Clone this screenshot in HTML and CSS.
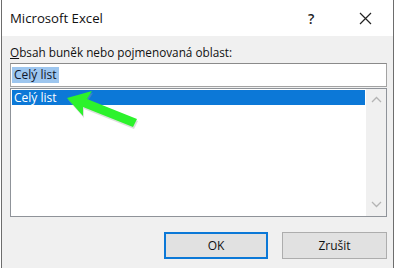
FILE: index.html
```html
<!DOCTYPE html>
<html>
<head>
<meta charset="utf-8">
<link rel="stylesheet" href="styles.css">
</head>
<body>
<div class="window">
  <div class="titlebar">
    <span class="title">Microsoft Excel</span>
    <span class="help">?</span>
    <span class="close">
      <svg width="13" height="13" viewBox="0 0 13 13"><path d="M1 1 L12 12 M12 1 L1 12" stroke="#222" stroke-width="1.2" fill="none"/></svg>
    </span>
  </div>
  <div class="content">
    <div class="label"><u>O</u>bsah buněk nebo pojmenovaná oblast:</div>
    <div class="input"><span class="sel">Celý list</span></div>
    <div class="listbox">
      <div class="items">
        <div class="item selected">Celý list</div>
      </div>
      <div class="scrollbar">
        <svg width="11" height="7" viewBox="0 0 11 7"><path d="M1 6 L5.5 1.5 L10 6" stroke="#b4b4b4" stroke-width="1.3" fill="none"/></svg>
        <svg width="11" height="7" viewBox="0 0 11 7"><path d="M1 1 L5.5 5.5 L10 1" stroke="#b4b4b4" stroke-width="1.3" fill="none"/></svg>
      </div>
    </div>
    <div class="buttons">
      <div class="btn default">OK</div>
      <div class="btn">Zrušit</div>
    </div>
  </div>
  <svg class="arrow" width="394" height="268" viewBox="0 0 394 268">
    <path d="M66 98 L91 91 L86 99 L136 119 L132 127 L82 107 L82 116 Z" fill="#9aa19a" opacity="0.35" transform="translate(1,2)"/>
    <path d="M66 98 L91 91 L86 99 L136 119 L132 127 L82 107 L82 116 Z" fill="#2cf22c"/>
  </svg>
</div>
</body>
</html>
```
FILE: styles.css
```css
html, body { margin: 0; padding: 0; background: #ffffff; }
body { font-family: "Open Sans", "Noto Sans", "Liberation Sans", sans-serif; color: #000; }
.window {
  position: relative;
  width: 391px;
  height: 268px;
  border-left: 1px solid #6d6d6d;
  border-right: 1px solid #6d6d6d;
  display: flex;
  flex-direction: column;
  background: #f0f0f0;
  margin-left: 1px;
}
.titlebar {
  height: 36px;
  background: #fff;
  display: flex;
  align-items: center;
  padding-left: 8px;
}
.title { font-size: 13.2px; flex: 1; color: #111; }
.help { font-size: 14px; font-weight: 600; width: 14px; margin-right: 37px; color: #222; }
.close { width: 13px; height: 13px; margin-right: 21px; display: flex; }
.content {
  flex: 1;
  padding: 8px 6px 0 8px;
  display: flex;
  flex-direction: column;
}
.label { font-size: 11.75px; line-height: 16px; color: #111; height: 19px; }
.input {
  height: 22px;
  background: #fff;
  border: 1px solid #a3a3a3;
  border-top-color: #8a8a8a;
  display: flex;
  align-items: center;
  padding-left: 1px;
  font-size: 12px;
}
.sel { background: #9dc6ef; color: #10162a; padding: 0 2px; line-height: 16px; }
.listbox {
  margin-top: 1px;
  height: 127px;
  background: #fff;
  border: 1px solid #8f9399;
  display: flex;
}
.items { flex: 1; padding: 1px 1px 0 1px; }
.item { font-size: 12px; line-height: 15px; padding-left: 2px; }
.item.selected { background: #0c78d7; color: #fff; }
.scrollbar {
  width: 20px;
  background: #f0f0f0;
  display: flex;
  flex-direction: column;
  justify-content: space-between;
  align-items: center;
  padding: 7px 0 8px;
}
.buttons {
  display: flex;
  justify-content: flex-end;
  gap: 14px;
  margin-top: 15px;
}
.btn {
  width: 103px;
  height: 25px;
  border: 1px solid #adadad;
  background: #e1e1e1;
  font-size: 12px;
  display: flex;
  align-items: center;
  justify-content: center;
  color: #111;
}
.btn.default { border: 2px solid #0b78d7; width: 100px; height: 23px; }
.arrow { position: absolute; left: -1px; top: 0; pointer-events: none; }
```
